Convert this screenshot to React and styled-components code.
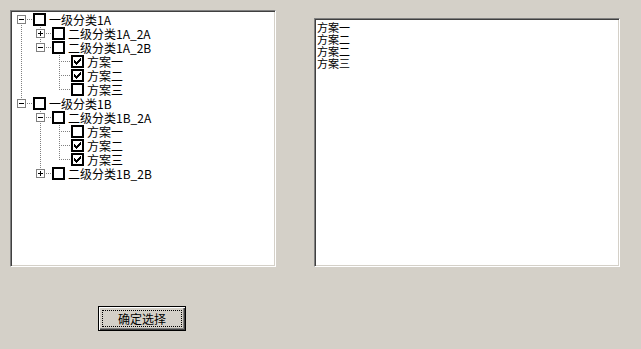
import React from "react";
import styled, { createGlobalStyle } from "styled-components";

const GlobalStyle = createGlobalStyle`
  html, body {
    margin: 0;
    padding: 0;
    background: #d4d0c8;
  }
  body {
    font-family: "Noto Sans CJK SC", "Liberation Sans", sans-serif;
    font-size: 12px;
    color: #000;
  }
`;

const Page = styled.div`
  width: 641px;
  height: 349px;
  box-sizing: border-box;
  padding: 10px 0 0 10px;
  background: #d4d0c8;
`;

const TopRow = styled.div`
  display: flex;
  align-items: flex-start;
`;

const Sunken = styled.div`
  box-sizing: border-box;
  background: #fff;
  border: 1px solid;
  border-color: #808080 #fff #fff #808080;
  box-shadow: inset 1px 1px #404040, inset -1px -1px #d4d0c8;
  padding: 1px;
  overflow: hidden;
`;

const TreeBox = styled(Sunken)`
  width: 266px;
  height: 257px;
  padding-top: 2px;
`;

const ListBox = styled(Sunken)`
  width: 306px;
  height: 249px;
  margin-left: 38px;
  margin-top: 8px;
  padding: 2px 2px;
`;

const ListLine = styled.div`
  font-size: 11px;
  line-height: 12px;
  height: 12px;
  white-space: nowrap;
`;

const Row = styled.div`
  display: flex;
  align-items: flex-start;
  height: 14px;
`;

const Check = styled.span`
  box-sizing: border-box;
  width: 13px;
  height: 13px;
  flex: none;
  border: 2px solid #000;
  background: #fff;
  display: flex;
  align-items: center;
  justify-content: center;
`;

const Label = styled.span`
  margin-left: 3px;
  font-size: 12px;
  line-height: 13px;
  white-space: nowrap;
`;

const Footer = styled.div`
  padding-left: 88px;
  margin-top: 39px;
`;

const Button = styled.button`
  box-sizing: border-box;
  width: 88px;
  height: 25px;
  padding: 3px;
  display: flex;
  background: #d4d0c8;
  border: 1px solid #000;
  box-shadow: inset 1px 1px #fff, inset -1px -1px #404040, inset -2px -2px #808080;
  font-family: "Noto Sans CJK SC", sans-serif;
  font-size: 12px;
  color: #000;
`;

const FocusRing = styled.span`
  flex: 1;
  border: 1px dotted #000;
  display: flex;
  align-items: center;
  justify-content: center;
  line-height: 12px;
`;

const tree = [
  {
    label: "一级分类1A",
    open: true,
    children: [
      { label: "二级分类1A_2A", open: false, children: [{ label: "方案一" }] },
      {
        label: "二级分类1A_2B",
        open: true,
        children: [
          { label: "方案一", checked: true },
          { label: "方案二", checked: true },
          { label: "方案三" },
        ],
      },
    ],
  },
  {
    label: "一级分类1B",
    open: true,
    children: [
      {
        label: "二级分类1B_2A",
        open: true,
        children: [
          { label: "方案一" },
          { label: "方案二", checked: true },
          { label: "方案三", checked: true },
        ],
      },
      { label: "二级分类1B_2B", open: false, children: [{ label: "方案一" }] },
    ],
  },
];

const picked = ["方案一", "方案二", "方案二", "方案三"];

function flatten(nodes, guides = [], out = [], root = true) {
  nodes.forEach((n, i) => {
    const last = i === nodes.length - 1;
    out.push({ ...n, guides, last, first: root && i === 0, id: out.length });
    if (n.children && n.open) flatten(n.children, [...guides, !last], out, false);
  });
  return out;
}

function dotsV(y0, y1) {
  let d = "";
  for (let y = y0; y <= y1; y += 2) d += `M9 ${y}h1v1h-1z`;
  return d;
}

function dotsH(x0, x1) {
  let d = "";
  for (let x = x0; x <= x1; x += 2) d += `M${x} 6h1v1h-1z`;
  return d;
}

function Guide({ pipe }) {
  return (
    <svg width="19" height="14" style={{ flex: "none" }}>
      {pipe && <path d={dotsV(0, 13)} fill="#808080" />}
    </svg>
  );
}

function Connector({ node }) {
  const hasKids = !!node.children;
  let d = dotsH(11, 19);
  if (!node.first) d += dotsV(0, 6);
  if (!node.last) d += dotsV(8, 13);
  return (
    <svg width="21" height="14" style={{ flex: "none" }}>
      <path d={d} fill="#808080" />
      {hasKids && (
        <g>
          <rect x="5.5" y="2.5" width="8" height="8" fill="#fff" stroke="#808080" />
          <rect x="7" y="6" width="5" height="1" fill="#000" />
          {!node.open && <rect x="9" y="4" width="1" height="5" fill="#000" />}
        </g>
      )}
    </svg>
  );
}

function CheckMark() {
  const rows = [[6, 6], [5, 6], [0, 0, 4, 6], [0, 1, 3, 5], [0, 4], [1, 3], [2, 2]];
  let d = "";
  rows.forEach((r, y) => {
    for (let k = 0; k < r.length; k += 2) d += `M${r[k]} ${y}h${r[k + 1] - r[k] + 1}v1h-${r[k + 1] - r[k] + 1}z`;
  });
  return (
    <svg width="7" height="7">
      <path d={d} fill="#000" />
    </svg>
  );
}

function TreeRow({ node }) {
  return (
    <Row>
      {node.guides.map((g, i) => (
        <Guide key={i} pipe={g} />
      ))}
      <Connector node={node} />
      <Check>{node.checked && <CheckMark />}</Check>
      <Label>{node.label}</Label>
    </Row>
  );
}

export default function App() {
  const rows = flatten(tree);
  return (
    <Page>
      <GlobalStyle />
      <TopRow>
        <TreeBox>
          {rows.map((n) => (
            <TreeRow key={n.id} node={n} />
          ))}
        </TreeBox>
        <ListBox>
          {picked.map((p, i) => (
            <ListLine key={i}>{p}</ListLine>
          ))}
        </ListBox>
      </TopRow>
      <Footer>
        <Button>
          <FocusRing>确定选择</FocusRing>
        </Button>
      </Footer>
    </Page>
  );
}
